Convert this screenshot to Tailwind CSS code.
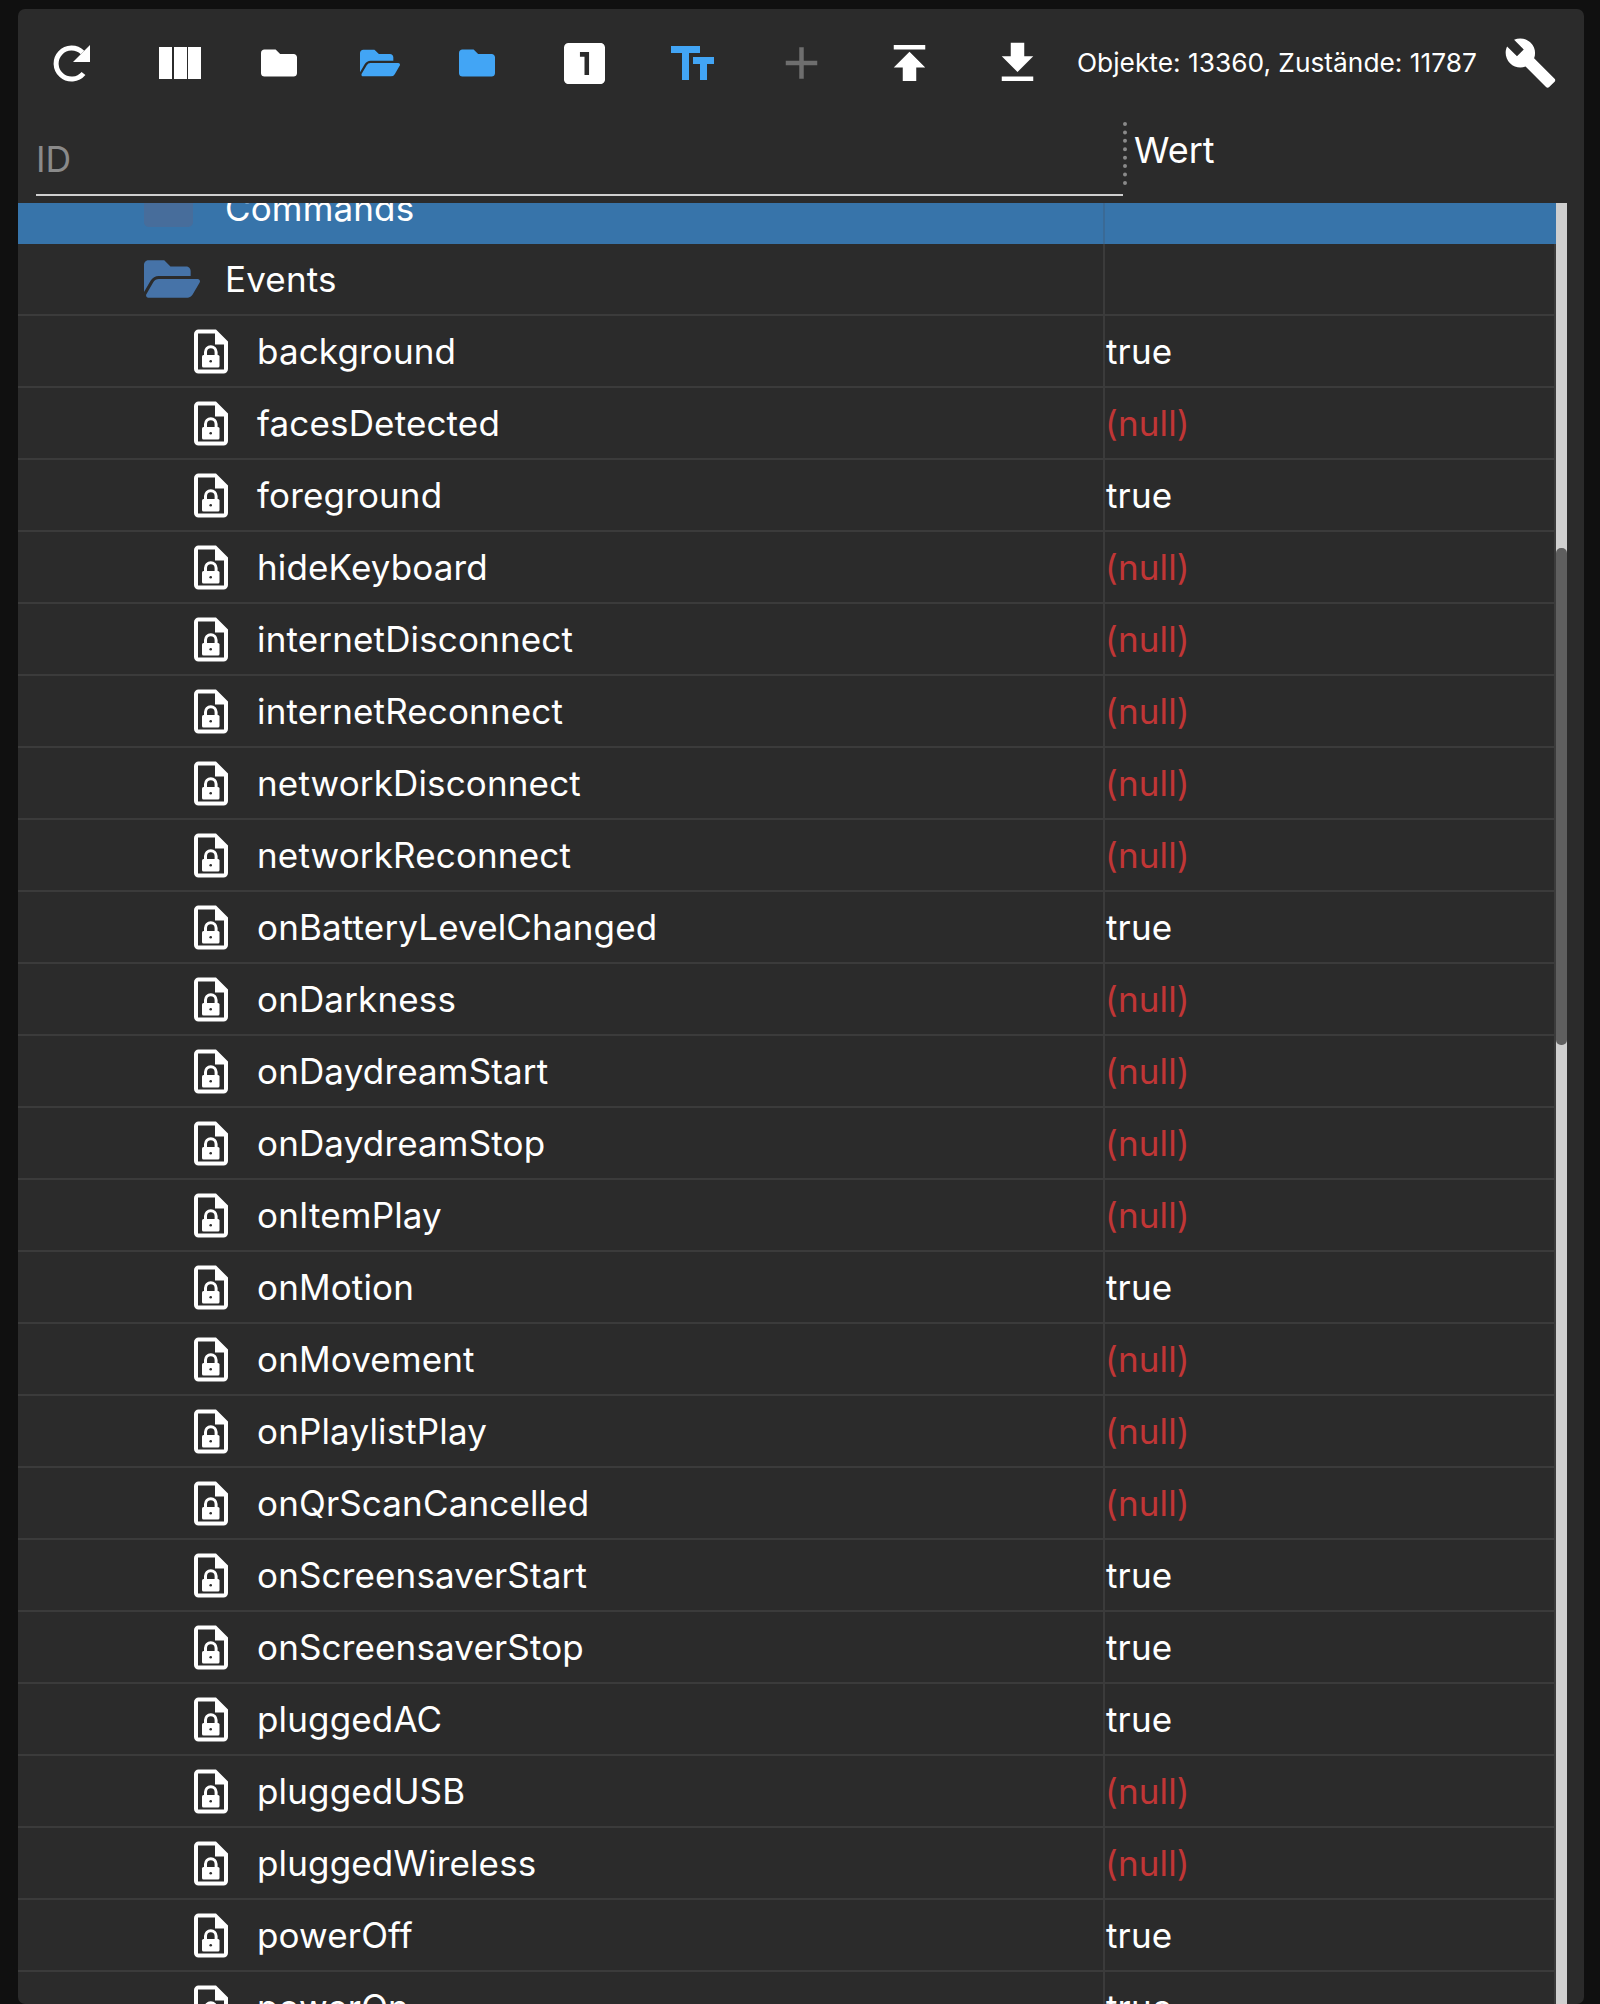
<!DOCTYPE html>
<html lang="de">
<head>
  <meta charset="UTF-8">
  <meta name="viewport" content="width=device-width, initial-scale=1.0">
  <title>Objekte</title>
  <script src="https://cdn.jsdelivr.net/npm/@tailwindcss/browser@4"></script>
</head>
<body class="bg-[#101010] h-[2004px] overflow-hidden font-['Inter',sans-serif]">
  <svg class="hidden">
    <symbol id="file-lock" viewBox="0 0 34 45">
      <path fill="#fff" fill-rule="evenodd" d="M5 0.500H22L34 12.500V40a4.500 4.500 0 0 1-4.500 4.500H4.500a4.500 4.500 0 0 1-4.500-4.500V5a4.500 4.500 0 0 1 5-4.500zM4 4.500V40.500H30V15.500H21V4.500z"/>
      <path fill="#fff" d="M24.500 5.500L30.500 12H24.500z"/>
      <path fill="none" stroke="#fff" stroke-width="3" d="M11.500 27v-4a5.300 5.300 0 0 1 10.600 0v4"/>
      <rect x="8" y="26" width="17.500" height="12.500" rx="1.500" fill="#fff"/>
      <circle cx="16.700" cy="32.300" r="1.300" fill="#2b2b2b"/>
    </symbol>
    <symbol id="folder-open" viewBox="0 0 576 512">
      <path d="M572.694 292.093L500.27 416.248A63.997 63.997 0 0 1 444.989 448H45.025c-18.523 0-30.064-20.093-20.731-36.093l72.424-124.155A64 64 0 0 1 152 256h399.964c18.523 0 30.064 20.093 20.73 36.093zM152 224h328v-48c0-26.51-21.49-48-48-48H272l-64-64H48C21.49 64 0 85.49 0 112v278.046l69.077-118.418C86.214 242.25 117.989 224 152 224z"/>
    </symbol>
    <symbol id="folder" viewBox="0 0 512 512">
      <path d="M464 128H272l-64-64H48C21.49 64 0 85.49 0 112v288c0 26.51 21.49 48 48 48h416c26.51 0 48-21.49 48-48V176c0-26.51-21.49-48-48-48z"/>
    </symbol>
  </svg>

  <div class="ml-[18px] mt-[9px] w-[1566px] h-[1995px] bg-[#2b2b2b] rounded-[7px] overflow-hidden flex flex-col">
    <!-- toolbar -->
    <div class="h-[107px] shrink-0 flex items-start pt-[27px] text-white">
      <div class="ml-[35px] w-[38px] h-[54px] flex items-center">
        <svg class="w-[38px] h-[38px]" viewBox="0 0 38 38">
          <path fill="none" stroke="#fff" stroke-width="5" d="M29.500 8.500A15.500 15.500 0 1 0 30.500 29.500"/>
          <path fill="#fff" d="M37 1V18H20z"/>
        </svg>
      </div>
      <div class="ml-[68px] h-[54px] flex items-center gap-[1.5px]">
        <span class="block w-[13px] h-[32px] bg-white"></span>
        <span class="block w-[13px] h-[32px] bg-white"></span>
        <span class="block w-[13px] h-[32px] bg-white"></span>
      </div>
      <svg class="ml-[60px] w-[36px] h-[54px] fill-white"><use href="#folder"/></svg>
      <svg class="ml-[63px] w-[40px] h-[54px] fill-[#42a5f5]"><use href="#folder-open"/></svg>
      <svg class="ml-[59px] w-[36px] h-[54px] fill-[#42a5f5]"><use href="#folder"/></svg>
      <div class="ml-[69px] h-[54px] flex items-center">
        <svg class="w-[41px] h-[41px] fill-white" viewBox="3 3 18 18"><path d="M19 3H5c-1.100 0-2 .9-2 2v14c0 1.100.9 2 2 2h14c1.100 0 2-.9 2-2V5c0-1.100-.9-2-2-2zm-5 14h-2V9h-2V7h4v10z"/></svg>
      </div>
      <div class="ml-[66px] h-[54px] flex items-center">
        <svg class="w-[43px] h-[34px] fill-[#42a5f5]" viewBox="0 0 43 34"><path d="M0 0H29V7H18V34H11V7H0zM22 11H43V18H36V34H29V18H22z"/></svg>
      </div>
      <svg class="ml-[60px] w-[55px] h-[54px] fill-[#6e6e6e]" viewBox="0 0 24 24"><path d="M19 13h-6v6h-2v-6H5v-2h6V5h2v6h6v2z"/></svg>
      <svg class="ml-[53px] w-[55px] h-[54px] fill-white" viewBox="0 0 24 24"><path d="M5 4v2h14V4H5zm0 10h4v6h6v-6h4l-7-7-7 7z"/></svg>
      <svg class="ml-[53px] w-[55px] h-[54px] fill-white" viewBox="0 0 24 24"><path d="M19 9h-4V3H9v6H5l7 7 7-7zM5 18v2h14v-2H5z"/></svg>
      <span class="ml-[32px] w-[398px] h-[54px] leading-[54px] text-[26.3px] whitespace-nowrap">Objekte: 13360, Zustände: 11787</span>
      <svg class="ml-[27px] w-[57px] h-[54px] fill-white" viewBox="0 0 24 24"><path d="M22.700 19l-9.100-9.100c.9-2.300.4-5-1.500-6.900-2-2-5-2.400-7.400-1.300L9 6 6 9 1.600 4.700C.4 7.100.9 10.100 2.900 12.100c1.900 1.900 4.600 2.400 6.900 1.500l9.100 9.100c.4.4 1 .4 1.400 0l2.300-2.300c.5-.4.5-1.100.1-1.400z"/></svg>
    </div>

    <!-- filter header -->
    <div class="h-[87px] shrink-0 flex items-start">
      <div class="ml-[18px] w-[1087px] h-[80px] border-b-2 border-[#cfcfcf] flex items-end pb-[7px]">
        <span class="text-[35.5px] leading-[54px] text-[#8a8a8a]">ID</span>
      </div>
      <div class="mt-[6px] w-[7px] h-[63px] border-l-4 border-dotted border-[#8a8a8a]"></div>
      <span class="ml-[4px] mt-[9px] text-[36px] leading-[50px] text-white">Wert</span>
    </div>

    <!-- tree -->
    <div class="relative flex-1 overflow-hidden">
      <div class="absolute top-0 right-[17px] bottom-0 w-[11px] bg-[#cfcfcf]">
        <div class="mt-[345px] h-[497px] rounded-[5px] bg-[#5f5f5f]"></div>
      </div>
      <div class="mt-[-31px] w-[1538px] text-[35px] tracking-[0.15px] text-white">
        <div class="flex h-[72px] bg-[#3774aa]">
          <div class="w-[1087px] flex items-center shrink-0 border-r-2 border-[#3a6a96]">
            <svg class="ml-[126px] w-[49px] h-[49px] fill-[#476d9b]"><use href="#folder"/></svg>
            <span class="ml-[32px]">Commands</span>
          </div>
        </div>
        <div class="flex h-[72px] border-b-2 border-r-2 border-[#3b3b3b]">
          <div class="w-[1087px] flex items-center shrink-0 border-r-2 border-[#3b3b3b]">
            <svg class="ml-[126px] w-[56px] h-[54px] fill-[#4673a8]"><use href="#folder-open"/></svg>
            <span class="ml-[25px]">Events</span>
          </div>
        </div>
        <div class="flex h-[72px] border-b-2 border-r-2 border-[#3b3b3b] items-center"><div class="w-[1087px] h-full flex items-center shrink-0 border-r-2 border-[#3b3b3b]"><svg class="ml-[176px] w-[34px] h-[45px]"><use href="#file-lock"/></svg><span class="ml-[29px]">background</span></div><span class="ml-[1px]">true</span></div>
        <div class="flex h-[72px] border-b-2 border-r-2 border-[#3b3b3b] items-center"><div class="w-[1087px] h-full flex items-center shrink-0 border-r-2 border-[#3b3b3b]"><svg class="ml-[176px] w-[34px] h-[45px]"><use href="#file-lock"/></svg><span class="ml-[29px]">facesDetected</span></div><span class="text-[#c03636]">(null)</span></div>
        <div class="flex h-[72px] border-b-2 border-r-2 border-[#3b3b3b] items-center"><div class="w-[1087px] h-full flex items-center shrink-0 border-r-2 border-[#3b3b3b]"><svg class="ml-[176px] w-[34px] h-[45px]"><use href="#file-lock"/></svg><span class="ml-[29px]">foreground</span></div><span class="ml-[1px]">true</span></div>
        <div class="flex h-[72px] border-b-2 border-r-2 border-[#3b3b3b] items-center"><div class="w-[1087px] h-full flex items-center shrink-0 border-r-2 border-[#3b3b3b]"><svg class="ml-[176px] w-[34px] h-[45px]"><use href="#file-lock"/></svg><span class="ml-[29px]">hideKeyboard</span></div><span class="text-[#c03636]">(null)</span></div>
        <div class="flex h-[72px] border-b-2 border-r-2 border-[#3b3b3b] items-center"><div class="w-[1087px] h-full flex items-center shrink-0 border-r-2 border-[#3b3b3b]"><svg class="ml-[176px] w-[34px] h-[45px]"><use href="#file-lock"/></svg><span class="ml-[29px]">internetDisconnect</span></div><span class="text-[#c03636]">(null)</span></div>
        <div class="flex h-[72px] border-b-2 border-r-2 border-[#3b3b3b] items-center"><div class="w-[1087px] h-full flex items-center shrink-0 border-r-2 border-[#3b3b3b]"><svg class="ml-[176px] w-[34px] h-[45px]"><use href="#file-lock"/></svg><span class="ml-[29px]">internetReconnect</span></div><span class="text-[#c03636]">(null)</span></div>
        <div class="flex h-[72px] border-b-2 border-r-2 border-[#3b3b3b] items-center"><div class="w-[1087px] h-full flex items-center shrink-0 border-r-2 border-[#3b3b3b]"><svg class="ml-[176px] w-[34px] h-[45px]"><use href="#file-lock"/></svg><span class="ml-[29px]">networkDisconnect</span></div><span class="text-[#c03636]">(null)</span></div>
        <div class="flex h-[72px] border-b-2 border-r-2 border-[#3b3b3b] items-center"><div class="w-[1087px] h-full flex items-center shrink-0 border-r-2 border-[#3b3b3b]"><svg class="ml-[176px] w-[34px] h-[45px]"><use href="#file-lock"/></svg><span class="ml-[29px]">networkReconnect</span></div><span class="text-[#c03636]">(null)</span></div>
        <div class="flex h-[72px] border-b-2 border-r-2 border-[#3b3b3b] items-center"><div class="w-[1087px] h-full flex items-center shrink-0 border-r-2 border-[#3b3b3b]"><svg class="ml-[176px] w-[34px] h-[45px]"><use href="#file-lock"/></svg><span class="ml-[29px]">onBatteryLevelChanged</span></div><span class="ml-[1px]">true</span></div>
        <div class="flex h-[72px] border-b-2 border-r-2 border-[#3b3b3b] items-center"><div class="w-[1087px] h-full flex items-center shrink-0 border-r-2 border-[#3b3b3b]"><svg class="ml-[176px] w-[34px] h-[45px]"><use href="#file-lock"/></svg><span class="ml-[29px]">onDarkness</span></div><span class="text-[#c03636]">(null)</span></div>
        <div class="flex h-[72px] border-b-2 border-r-2 border-[#3b3b3b] items-center"><div class="w-[1087px] h-full flex items-center shrink-0 border-r-2 border-[#3b3b3b]"><svg class="ml-[176px] w-[34px] h-[45px]"><use href="#file-lock"/></svg><span class="ml-[29px]">onDaydreamStart</span></div><span class="text-[#c03636]">(null)</span></div>
        <div class="flex h-[72px] border-b-2 border-r-2 border-[#3b3b3b] items-center"><div class="w-[1087px] h-full flex items-center shrink-0 border-r-2 border-[#3b3b3b]"><svg class="ml-[176px] w-[34px] h-[45px]"><use href="#file-lock"/></svg><span class="ml-[29px]">onDaydreamStop</span></div><span class="text-[#c03636]">(null)</span></div>
        <div class="flex h-[72px] border-b-2 border-r-2 border-[#3b3b3b] items-center"><div class="w-[1087px] h-full flex items-center shrink-0 border-r-2 border-[#3b3b3b]"><svg class="ml-[176px] w-[34px] h-[45px]"><use href="#file-lock"/></svg><span class="ml-[29px]">onItemPlay</span></div><span class="text-[#c03636]">(null)</span></div>
        <div class="flex h-[72px] border-b-2 border-r-2 border-[#3b3b3b] items-center"><div class="w-[1087px] h-full flex items-center shrink-0 border-r-2 border-[#3b3b3b]"><svg class="ml-[176px] w-[34px] h-[45px]"><use href="#file-lock"/></svg><span class="ml-[29px]">onMotion</span></div><span class="ml-[1px]">true</span></div>
        <div class="flex h-[72px] border-b-2 border-r-2 border-[#3b3b3b] items-center"><div class="w-[1087px] h-full flex items-center shrink-0 border-r-2 border-[#3b3b3b]"><svg class="ml-[176px] w-[34px] h-[45px]"><use href="#file-lock"/></svg><span class="ml-[29px]">onMovement</span></div><span class="text-[#c03636]">(null)</span></div>
        <div class="flex h-[72px] border-b-2 border-r-2 border-[#3b3b3b] items-center"><div class="w-[1087px] h-full flex items-center shrink-0 border-r-2 border-[#3b3b3b]"><svg class="ml-[176px] w-[34px] h-[45px]"><use href="#file-lock"/></svg><span class="ml-[29px]">onPlaylistPlay</span></div><span class="text-[#c03636]">(null)</span></div>
        <div class="flex h-[72px] border-b-2 border-r-2 border-[#3b3b3b] items-center"><div class="w-[1087px] h-full flex items-center shrink-0 border-r-2 border-[#3b3b3b]"><svg class="ml-[176px] w-[34px] h-[45px]"><use href="#file-lock"/></svg><span class="ml-[29px]">onQrScanCancelled</span></div><span class="text-[#c03636]">(null)</span></div>
        <div class="flex h-[72px] border-b-2 border-r-2 border-[#3b3b3b] items-center"><div class="w-[1087px] h-full flex items-center shrink-0 border-r-2 border-[#3b3b3b]"><svg class="ml-[176px] w-[34px] h-[45px]"><use href="#file-lock"/></svg><span class="ml-[29px]">onScreensaverStart</span></div><span class="ml-[1px]">true</span></div>
        <div class="flex h-[72px] border-b-2 border-r-2 border-[#3b3b3b] items-center"><div class="w-[1087px] h-full flex items-center shrink-0 border-r-2 border-[#3b3b3b]"><svg class="ml-[176px] w-[34px] h-[45px]"><use href="#file-lock"/></svg><span class="ml-[29px]">onScreensaverStop</span></div><span class="ml-[1px]">true</span></div>
        <div class="flex h-[72px] border-b-2 border-r-2 border-[#3b3b3b] items-center"><div class="w-[1087px] h-full flex items-center shrink-0 border-r-2 border-[#3b3b3b]"><svg class="ml-[176px] w-[34px] h-[45px]"><use href="#file-lock"/></svg><span class="ml-[29px]">pluggedAC</span></div><span class="ml-[1px]">true</span></div>
        <div class="flex h-[72px] border-b-2 border-r-2 border-[#3b3b3b] items-center"><div class="w-[1087px] h-full flex items-center shrink-0 border-r-2 border-[#3b3b3b]"><svg class="ml-[176px] w-[34px] h-[45px]"><use href="#file-lock"/></svg><span class="ml-[29px]">pluggedUSB</span></div><span class="text-[#c03636]">(null)</span></div>
        <div class="flex h-[72px] border-b-2 border-r-2 border-[#3b3b3b] items-center"><div class="w-[1087px] h-full flex items-center shrink-0 border-r-2 border-[#3b3b3b]"><svg class="ml-[176px] w-[34px] h-[45px]"><use href="#file-lock"/></svg><span class="ml-[29px]">pluggedWireless</span></div><span class="text-[#c03636]">(null)</span></div>
        <div class="flex h-[72px] border-b-2 border-r-2 border-[#3b3b3b] items-center"><div class="w-[1087px] h-full flex items-center shrink-0 border-r-2 border-[#3b3b3b]"><svg class="ml-[176px] w-[34px] h-[45px]"><use href="#file-lock"/></svg><span class="ml-[29px]">powerOff</span></div><span class="ml-[1px]">true</span></div>
        <div class="flex h-[72px] border-b-2 border-r-2 border-[#3b3b3b] items-center"><div class="w-[1087px] h-full flex items-center shrink-0 border-r-2 border-[#3b3b3b]"><svg class="ml-[176px] w-[34px] h-[45px]"><use href="#file-lock"/></svg><span class="ml-[29px]">powerOn</span></div><span class="ml-[1px]">true</span></div>
      </div>
    </div>
  </div>
</body>
</html>
